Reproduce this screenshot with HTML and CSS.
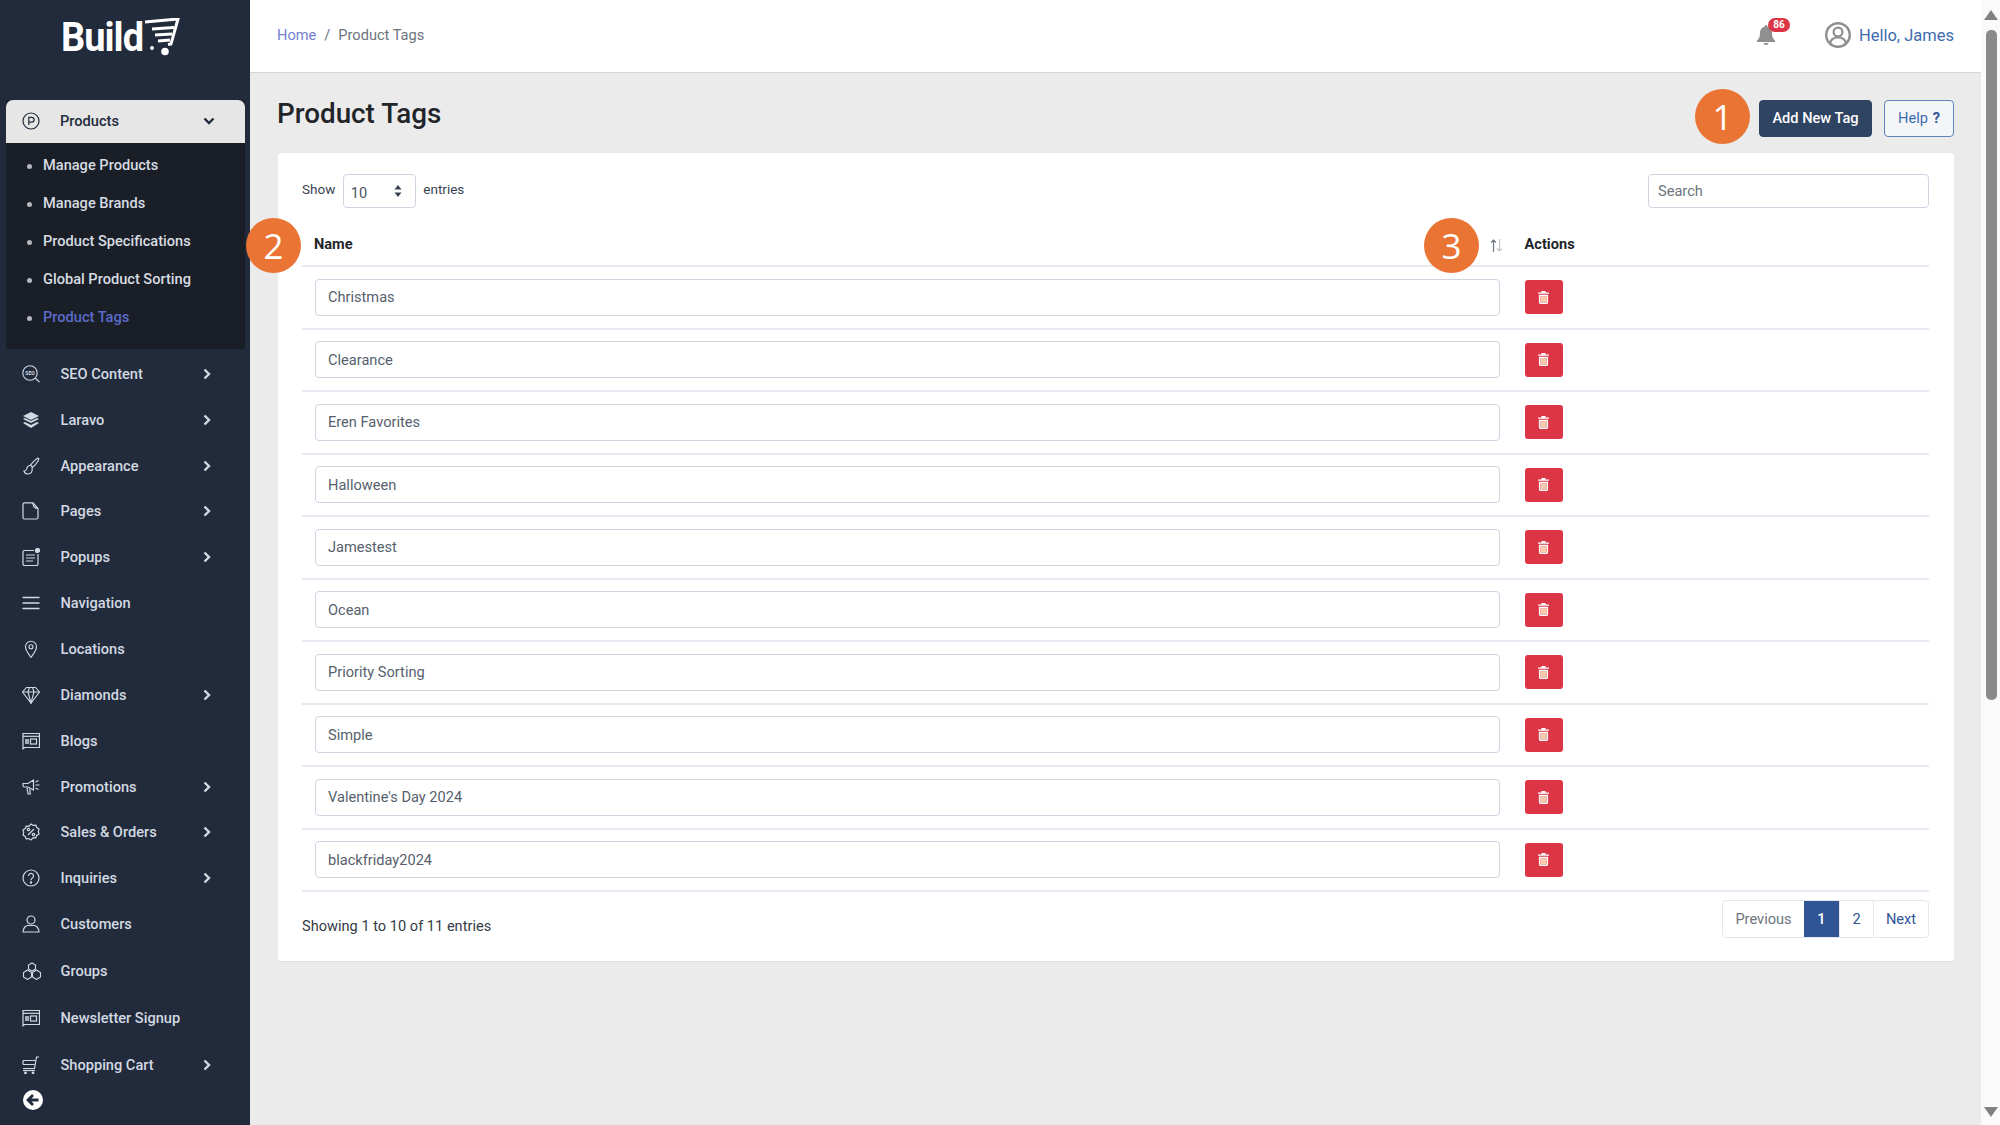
FILE: index.html
```html
<!DOCTYPE html>
<html lang="en">
<head>
<meta charset="utf-8">
<title>Product Tags</title>
<link rel="stylesheet" href="styles.css">
</head>
<body>
<svg class="defs" width="0" height="0">
  <symbol id="i-chev" viewBox="0 0 8 12"><path d="M1.500 1.500L6 6l-4.500 4.500" fill="none" stroke="currentColor" stroke-width="2.400"/></symbol>
  <symbol id="i-trash" viewBox="0 0 12 14"><path fill="#fff" d="M4 0h4l.5 1.500H12V3H0V1.500h3.500z"/><path fill="#fff" fill-rule="evenodd" d="M1 4h10v8.500A1.500 1.500 0 0 1 9.500 14h-7A1.500 1.500 0 0 1 1 12.500zm1.500 1.500v7h7v-7z"/><rect x="2.500" y="5.500" width="7" height="7" fill="#f6cbb0"/></symbol>
  <symbol id="i-news" viewBox="0 0 18 18"><g fill="none" stroke="currentColor" stroke-width="1.200"><path d="M1 16.800V1.500h16.500v14H2.500z"/><path d="M1 4.300h16.500"/><rect x="8.500" y="7" width="6" height="5"/><path d="M4 7v5M6 7v5" stroke-width="1.500"/></g></symbol>
</svg>
<div class="app">
  <aside class="sidebar">
    <div class="logo">
      <span class="logo-text">Build</span>
      <svg class="logo-cart" viewBox="0 0 36 38" fill="none" stroke="#fff" stroke-width="3"><path d="M1 4l33-3-7 25-3 .5"/><path d="M8 11l22-1.500M11 17l17-1M14 23l12-1"/><circle cx="21" cy="33.500" r="3.800" fill="#fff" stroke="none"/><circle cx="8" cy="30" r="1.900" fill="#fff" stroke="none"/></svg>
    </div>
    <nav class="nav">
      <div class="group">
        <div class="group-head">
          <svg class="ico" viewBox="0 0 18 18" fill="none" stroke="currentColor" stroke-width="1.200"><circle cx="9" cy="9" r="8"/><path d="M6.800 13V5.300h2.900a2.400 2.400 0 0 1 0 4.800H6.800"/></svg>
          <span class="label">Products</span>
          <svg class="chev-down" viewBox="0 0 12 8" fill="none" stroke="currentColor" stroke-width="2.400"><path d="M1.500 1.500L6 6l4.500-4.500"/></svg>
        </div>
        <ul class="sub">
          <li class="sub-item">Manage Products</li>
          <li class="sub-item">Manage Brands</li>
          <li class="sub-item">Product Specifications</li>
          <li class="sub-item">Global Product Sorting</li>
          <li class="sub-item sub-active">Product Tags</li>
        </ul>
      </div>

      <div class="item"><svg class="ico" viewBox="0 0 18 18" fill="none" stroke="currentColor" stroke-width="1.100"><circle cx="8" cy="8" r="7.200"/><path d="M13 13l4.500 4"/><text class="seo-text" x="8" y="9.800" text-anchor="middle">SEO</text></svg><span class="label">SEO Content</span><svg class="chev"><use href="#i-chev"/></svg></div>
      <div class="item"><svg class="ico" viewBox="0 0 18 18" fill="currentColor"><path d="M9 1l8 4-8 4-8-4z"/><path d="M1 8l2-1 6 3 6-3 2 1-8 4z"/><path d="M1 12l2-1 6 3 6-3 2 1-8 5z"/></svg><span class="label">Laravo</span><svg class="chev"><use href="#i-chev"/></svg></div>
      <div class="item"><svg class="ico" viewBox="0 0 18 18" fill="none" stroke="currentColor" stroke-width="1.200"><path d="M16.500 1.200c-1.200-.6-6 4-8 7l2 2c3-2 7.200-7.500 6-9z"/><path d="M8 8.500c-2.500 0-3 2-3.300 3.500-.3 1.500-1.200 2-2.700 2 .5 2 2 3 4 3 3 0 5-2.500 4-6.500"/></svg><span class="label">Appearance</span><svg class="chev"><use href="#i-chev"/></svg></div>
      <div class="item"><svg class="ico" viewBox="0 0 18 18" fill="none" stroke="currentColor" stroke-width="1.200"><path d="M2.500.8H11l5 5.700V15.500a1.500 1.500 0 0 1-1.500 1.500h-12A1.500 1.500 0 0 1 1 15.500V2.300A1.500 1.500 0 0 1 2.500.8z"/><path d="M11 .8c0 3.500 1.500 5.700 5 5.700"/></svg><span class="label">Pages</span><svg class="chev"><use href="#i-chev"/></svg></div>
      <div class="item"><svg class="ico" viewBox="0 0 18 18" fill="none" stroke="currentColor" stroke-width="1.200"><path d="M12 2.500H2.500A1.500 1.500 0 0 0 1 4v12a1.500 1.500 0 0 0 1.500 1.500h12A1.500 1.500 0 0 0 16 16V6"/><path d="M4 7h9M4 10h9M4 13h7"/><circle cx="15.500" cy="2.500" r="2" fill="currentColor"/></svg><span class="label">Popups</span><svg class="chev"><use href="#i-chev"/></svg></div>
      <div class="item"><svg class="ico" viewBox="0 0 18 18" fill="none" stroke="currentColor" stroke-width="1.500"><path d="M.5 3.500h17M.5 9h17M.5 14.500h17"/></svg><span class="label">Navigation</span></div>
      <div class="item"><svg class="ico" viewBox="0 0 18 18" fill="none" stroke="currentColor" stroke-width="1.100"><path d="M9 17.300C6 13.500 3.500 10.500 3.500 6.800a5.500 5.500 0 0 1 11 0c0 3.700-2.500 6.700-5.500 10.500z"/><circle cx="9" cy="6.800" r="2"/></svg><span class="label">Locations</span></div>
      <div class="item"><svg class="ico" viewBox="0 0 18 18" fill="none" stroke="currentColor" stroke-width="1.100"><path d="M4.500 1.500h9L17.500 6 9 17 .5 6z"/><path d="M.5 6h17M6 6l3 11 3-11M6 6l1.500-4.500M12 6l-1.500-4.500"/></svg><span class="label">Diamonds</span><svg class="chev"><use href="#i-chev"/></svg></div>
      <div class="item"><svg class="ico"><use href="#i-news"/></svg><span class="label">Blogs</span></div>
      <div class="item"><svg class="ico" viewBox="0 0 18 18" fill="none" stroke="currentColor" stroke-width="1.200"><path d="M1 5.500h5l5.500-3.500v10L6 9H2.500A1.500 1.500 0 0 1 1 7.500z"/><path d="M5 9.500l1 6.500h2.200l-.4-5.500"/><path d="M13.500 4l3-1.500M13.500 7h4M13.500 10l3 1.500"/></svg><span class="label">Promotions</span><svg class="chev"><use href="#i-chev"/></svg></div>
      <div class="item"><svg class="ico" viewBox="0 0 18 18" fill="none" stroke="currentColor" stroke-width="1.200"><path d="M9 1l2.200 1.400 2.600-.2 1 2.400 2.200 1.400-.7 2.500.7 2.500-2.200 1.400-1 2.400-2.600-.2L9 17l-2.200-1.400-2.600.2-1-2.400L1 12l.7-2.500L1 7l2.200-1.400 1-2.400 2.600.2z"/><path d="M6 12l6-6"/><circle cx="6.500" cy="6.500" r="1.200"/><circle cx="11.500" cy="11.500" r="1.200"/></svg><span class="label">Sales &amp; Orders</span><svg class="chev"><use href="#i-chev"/></svg></div>
      <div class="item"><svg class="ico" viewBox="0 0 18 18" fill="none" stroke="currentColor" stroke-width="1.200"><circle cx="9" cy="9" r="8"/><path d="M6.500 7a2.500 2.500 0 1 1 3.800 2.100c-.9.600-1.300 1.100-1.300 2.100"/><circle cx="9" cy="13.500" r=".6" fill="currentColor"/></svg><span class="label">Inquiries</span><svg class="chev"><use href="#i-chev"/></svg></div>
      <div class="item"><svg class="ico" viewBox="0 0 18 18" fill="none" stroke="currentColor" stroke-width="1.200"><circle cx="9" cy="5" r="4"/><path d="M1 17c0-4 3-6.500 4.500-6.500h7c1.500 0 4.500 2.500 4.500 6.500z"/></svg><span class="label">Customers</span></div>
      <div class="item item-groups"><svg class="ico ico-wide" viewBox="0 0 20 18" fill="none" stroke="currentColor" stroke-width="1.100"><path d="M10 1l3.500 2v4L10 9 6.500 7V3z"/><path d="M5.500 8L9.500 10.500v4.500l-4 2.500-4-2.500v-4.500z"/><path d="M14.500 8l4 2.500v4.500l-4 2.500-4-2.500v-4.500z"/></svg><span class="label">Groups</span></div>
      <div class="item item-news"><svg class="ico"><use href="#i-news"/></svg><span class="label">Newsletter Signup</span></div>
      <div class="item"><svg class="ico" viewBox="0 0 18 18" fill="none" stroke="currentColor" stroke-width="1.200"><path d="M17 1h-2.500L12.500 12.500H1"/><path d="M1 4.500h12.500M1 8.500h11.800M1 4.500v4"/><path d="M1 14.500h12"/><circle cx="3.500" cy="17" r=".8" fill="currentColor"/><circle cx="11" cy="17" r=".8" fill="currentColor"/></svg><span class="label">Shopping Cart</span><svg class="chev"><use href="#i-chev"/></svg></div>
    </nav>
    <div class="collapse">
      <svg viewBox="0 0 20 20"><circle cx="10" cy="10" r="10" fill="#fff"/><path d="M15.500 10H6M10 5l-5 5 5 5" fill="none" stroke="#212b3b" stroke-width="2.800"/></svg>
    </div>
  </aside>

  <main class="main">
    <header class="topbar">
      <div class="crumbs"><a class="crumb-link">Home</a><span class="crumb-sep">/</span><span class="crumb-now">Product Tags</span></div>
      <div class="top-right">
        <div class="bell">
          <svg viewBox="0 0 18 20" fill="#8f8f8f"><path d="M9 0a1.500 1.500 0 0 0-1.400 1.800C4.800 2.500 3 4.800 3 7.500c0 4.500-1 6-3 8v1.500h18v-1.500c-2-2-3-3.500-3-8 0-2.700-1.800-5-4.600-5.700A1.500 1.500 0 0 0 9 0z"/><path d="M6.500 18a2.500 2 0 0 0 5 0z"/></svg>
          <span class="bell-badge">86</span>
        </div>
        <div class="user">
          <svg class="avatar" viewBox="0 0 26 26" fill="none"><circle cx="13" cy="13" r="11.800" stroke="#8f8f8f" stroke-width="2.400"/><circle cx="13" cy="10" r="4.400" stroke="#8f8f8f" stroke-width="2.200"/><path d="M5 21c1-4 4-5.500 8-5.500s7 1.500 8 5.500" stroke="#8f8f8f" stroke-width="2.200"/></svg>
          <span class="hello">Hello, James</span>
        </div>
      </div>
    </header>
    <div class="content">
      <div class="page-head">
        <h1 class="title">Product Tags</h1>
        <div class="head-actions">
          <span class="step step-1">1</span>
          <button class="btn-add">Add New Tag</button>
          <button class="btn-help">Help <b>?</b></button>
        </div>
      </div>
      <section class="card">
        <div class="tools">
          <div class="len">
            <span>Show</span>
            <div class="select-wrap">
              <select class="select"><option>10</option></select>
              <svg class="select-arrows" viewBox="0 0 8 12" fill="#3b4250"><path d="M4 0l3.500 4.500h-7zM4 12L.5 7.500h7z"/></svg>
            </div>
            <span>entries</span>
          </div>
          <input class="search" placeholder="Search">
        </div>
        <div class="thead">
          <div class="th-name">
            <span class="step step-2">2</span>
            <span>Name</span>
            <span class="step step-3">3</span>
            <svg class="sort" viewBox="0 0 13 13" fill="none" stroke-width="1.200"><path d="M3.500 13V1M1 3.500L3.500 1 6 3.500" stroke="#6f7680"/><path d="M9.500 0v12M7 9.500L9.500 12 12 9.500" stroke="#c3c7cf"/></svg>
          </div>
          <div class="th-act">Actions</div>
        </div>
        <div class="row"><div class="cell-name"><input class="tag" value="Christmas"></div><div class="cell-act"><button class="del"><svg><use href="#i-trash"/></svg></button></div></div>
        <div class="row"><div class="cell-name"><input class="tag" value="Clearance"></div><div class="cell-act"><button class="del"><svg><use href="#i-trash"/></svg></button></div></div>
        <div class="row"><div class="cell-name"><input class="tag" value="Eren Favorites"></div><div class="cell-act"><button class="del"><svg><use href="#i-trash"/></svg></button></div></div>
        <div class="row"><div class="cell-name"><input class="tag" value="Halloween"></div><div class="cell-act"><button class="del"><svg><use href="#i-trash"/></svg></button></div></div>
        <div class="row"><div class="cell-name"><input class="tag" value="Jamestest"></div><div class="cell-act"><button class="del"><svg><use href="#i-trash"/></svg></button></div></div>
        <div class="row"><div class="cell-name"><input class="tag" value="Ocean"></div><div class="cell-act"><button class="del"><svg><use href="#i-trash"/></svg></button></div></div>
        <div class="row"><div class="cell-name"><input class="tag" value="Priority Sorting"></div><div class="cell-act"><button class="del"><svg><use href="#i-trash"/></svg></button></div></div>
        <div class="row"><div class="cell-name"><input class="tag" value="Simple"></div><div class="cell-act"><button class="del"><svg><use href="#i-trash"/></svg></button></div></div>
        <div class="row"><div class="cell-name"><input class="tag" value="Valentine's Day 2024"></div><div class="cell-act"><button class="del"><svg><use href="#i-trash"/></svg></button></div></div>
        <div class="row"><div class="cell-name"><input class="tag" value="blackfriday2024"></div><div class="cell-act"><button class="del"><svg><use href="#i-trash"/></svg></button></div></div>
        <div class="foot">
          <span class="info">Showing 1 to 10 of 11 entries</span>
          <div class="pager">
            <a class="page page-prev">Previous</a>
            <a class="page page-on">1</a>
            <a class="page">2</a>
            <a class="page page-next">Next</a>
          </div>
        </div>
      </section>
    </div>
  </main>

  <div class="scrollbar">
    <span class="arrow-up"></span>
    <div class="track"><div class="thumb"></div></div>
    <span class="arrow-down"></span>
  </div>
</div>
</body>
</html>
```
FILE: styles.css
```css
* { box-sizing: border-box; }
html, body { margin: 0; height: 100%; overflow: hidden; }
body { font-family: Roboto, "Liberation Sans", sans-serif; font-size: 14.6px; color: #212529; background: #ebebeb; }
button, input, select { font-family: inherit; }
.defs { position: absolute; }

.app { display: grid; grid-template-columns: 250px 1fr 19px; height: 1125px; }

/* sidebar */
.sidebar { background: #212b3b; color: #d3d9e2; display: flex; flex-direction: column; font-weight: 500; }
.logo { height: 100px; padding: 18px 0 0 61px; display: flex; align-items: flex-start; gap: 1px; }
.logo-text { color: #fff; font-size: 38px; line-height: 38px; font-weight: 700; letter-spacing: -1px; transform: scaleY(1.08); }
.logo-cart { width: 36px; height: 38px; }
.nav { display: flex; flex-direction: column; }
.group { margin: 0 5px 2px 6px; background: #1a1f27; height: 249px; }
.group-head { height: 43px; background: #e6e6e6; color: #212b3b; border-radius: 7px 7px 0 0; display: flex; align-items: center; padding: 0 30px 1px 16px; }
.group-head .label { margin-left: 20px; flex: 1; }
.chev-down { width: 12px; height: 8px; }
.ico { width: 18px; height: 18px; flex: none; }
.ico-wide { width: 20px; height: 18px; margin-right: -2px; }
.seo-text { font-size: 5px; font-weight: 700; fill: currentColor; stroke: none; }
.sub { list-style: none; margin: 0; padding: 4px 0 0 37px; }
.sub-item { height: 37.900px; line-height: 37.900px; position: relative; color: #d7dbe2; }
.sub-item::before { content: ""; position: absolute; left: -16px; top: 17px; width: 5px; height: 5px; border-radius: 50%; background: #b5b8be; }
.sub-active { color: #5c6bc9; }
.item { height: 45.850px; display: flex; align-items: center; padding-left: 22px; }
.item .label { margin-left: 20.500px; flex: 1; }
.item-groups { height: 48px; }
.item-news { height: 47px; }
.chev { width: 8px; height: 12px; margin-right: 39px; }
.collapse { padding: 2px 0 0 23px; }
.collapse svg { display: block; width: 20px; height: 20px; }

/* main */
.main { display: flex; flex-direction: column; min-width: 0; }
.topbar { height: 73px; background: #fff; border-bottom: 1px solid #d6d6d6; display: flex; justify-content: space-between; align-items: center; padding: 0 27px 2px 27px; }
.crumbs { display: flex; gap: 8px; color: #6c757d; }
.crumb-link { color: #7480cf; }
.top-right { display: flex; align-items: center; }
.bell { position: relative; width: 18px; height: 20px; margin-right: 50px; }
.bell svg { display: block; width: 18px; height: 20px; }
.bell-badge { position: absolute; left: 11px; top: -7px; width: 22px; height: 14px; border-radius: 7px; background: #dc3545; color: #fff; font-size: 10px; font-weight: 700; line-height: 14px; text-align: center; }
.user { display: flex; align-items: center; gap: 8px; }
.avatar { width: 26px; height: 26px; }
.hello { font-size: 16.500px; color: #3d6cb0; }

.content { padding: 0 27px 0 28px; }
.page-head { height: 80px; display: flex; justify-content: space-between; align-items: center; }
.title { margin: 0 0 0 -1px; font-size: 27.800px; font-weight: 500; color: #212529; }
.head-actions { display: flex; align-items: center; gap: 12px; position: relative; margin-top: 10px; }
.btn-add { width: 113px; height: 37px; border: 1px solid #2f4363; border-radius: 4px; background: #2f4363; color: #fff; font-size: 14.600px; font-weight: 500; padding: 0; }
.btn-help { width: 70px; height: 37px; border: 1px solid #5f84bb; border-radius: 4px; background: #f4f5f7; color: #3d6cb0; font-size: 14.600px; padding: 0; word-spacing: 1px; }
.btn-help b { color: #2f5597; }
.step { position: absolute; width: 55px; height: 55px; border-radius: 50%; background: #ea7433; color: #fff; font-family: "Open Sans", sans-serif; font-size: 35px; font-weight: 400; line-height: 55px; text-align: center; }
.step-1 { left: -64px; top: -11px; }
.step-2 { left: -56px; top: -17px; }
.step-3 { left: 1122px; top: -17px; }

.card { background: #fff; border-radius: 4px; padding: 0 25px 0 24px; height: 808px; box-shadow: 0 1px 1px rgba(0,0,0,.05); }
.tools { height: 72px; display: flex; justify-content: space-between; align-items: flex-start; padding-top: 21px; }
.len { display: flex; align-items: flex-start; gap: 7.500px; font-size: 13.500px; line-height: 31px; color: #3a4250; height: 34px; }
.select-wrap { position: relative; width: 73px; height: 34px; }
.select { width: 100%; height: 34px; appearance: none; border: 1px solid #ced4e0; border-radius: 4px; background: #fff; padding: 3px 0 0 7px; font-size: 14.600px; color: #4a5362; }
.select-arrows { position: absolute; right: 14px; top: 11px; width: 8px; height: 12px; }
.search { width: 281px; height: 34px; border: 1px solid #ced4e0; border-radius: 4px; padding: 0 9px; font-size: 14.600px; background: #fff; }
.search::placeholder { color: #6c757d; }

.thead { display: grid; grid-template-columns: 1209px 1fr; height: 42px; border-bottom: 2px solid #e8e9f0; font-weight: 700; align-items: center; color: #212529; }
.th-name { position: relative; padding-left: 12px; padding-bottom: 2px; }
.th-act { padding-left: 13.500px; padding-bottom: 2px; }
.sort { position: absolute; right: 8px; top: 4px; width: 13px; height: 13px; }

.row { display: grid; grid-template-columns: 1209px 1fr; height: 62.500px; border-bottom: 2px solid #e8e9f0; align-items: center; }
.cell-name { padding: 0 11px 0 13px; }
.cell-act { padding-left: 13.500px; }
.tag { display: block; width: 100%; height: 37px; border: 1px solid #ced4e0; border-radius: 4px; padding: 0 12px; font-size: 14.600px; color: #565f6d; background: #fff; }
.del { display: flex; align-items: center; justify-content: center; width: 38px; height: 34px; border: 0; border-radius: 3px; background: #dc3545; padding: 0; }
.del svg { width: 11px; height: 13px; }

.foot { display: flex; justify-content: space-between; padding-top: 8px; }
.info { padding-top: 17px; color: #343b47; }
.pager { display: flex; height: 38px; border: 1px solid #e4e7ec; border-radius: 4px; overflow: hidden; background: #fff; }
.page { display: flex; align-items: center; justify-content: center; width: 34px; color: #2f5597; border-left: 1px solid #e4e7ec; }
.page-prev { width: 81px; color: #6c757d; border-left: 0; }
.page-on { width: 35px; background: #2f5597; color: #fff; font-weight: 500; border-left: 0; }
.page-next { width: 55px; }

/* scrollbar */
.scrollbar { background: #fafafa; display: flex; flex-direction: column; align-items: center; padding: 10px 0 8px; }
.arrow-up { width: 0; height: 0; border: 7px solid transparent; border-top: 0; border-bottom: 10px solid #808080; }
.arrow-down { width: 0; height: 0; border: 7px solid transparent; border-bottom: 0; border-top: 10px solid #808080; }
.track { flex: 1; width: 100%; padding: 0 3px 0 5px; margin-top: 10px; }
.thumb { height: 670px; border-radius: 5px; background: #8a8a8a; }
```
